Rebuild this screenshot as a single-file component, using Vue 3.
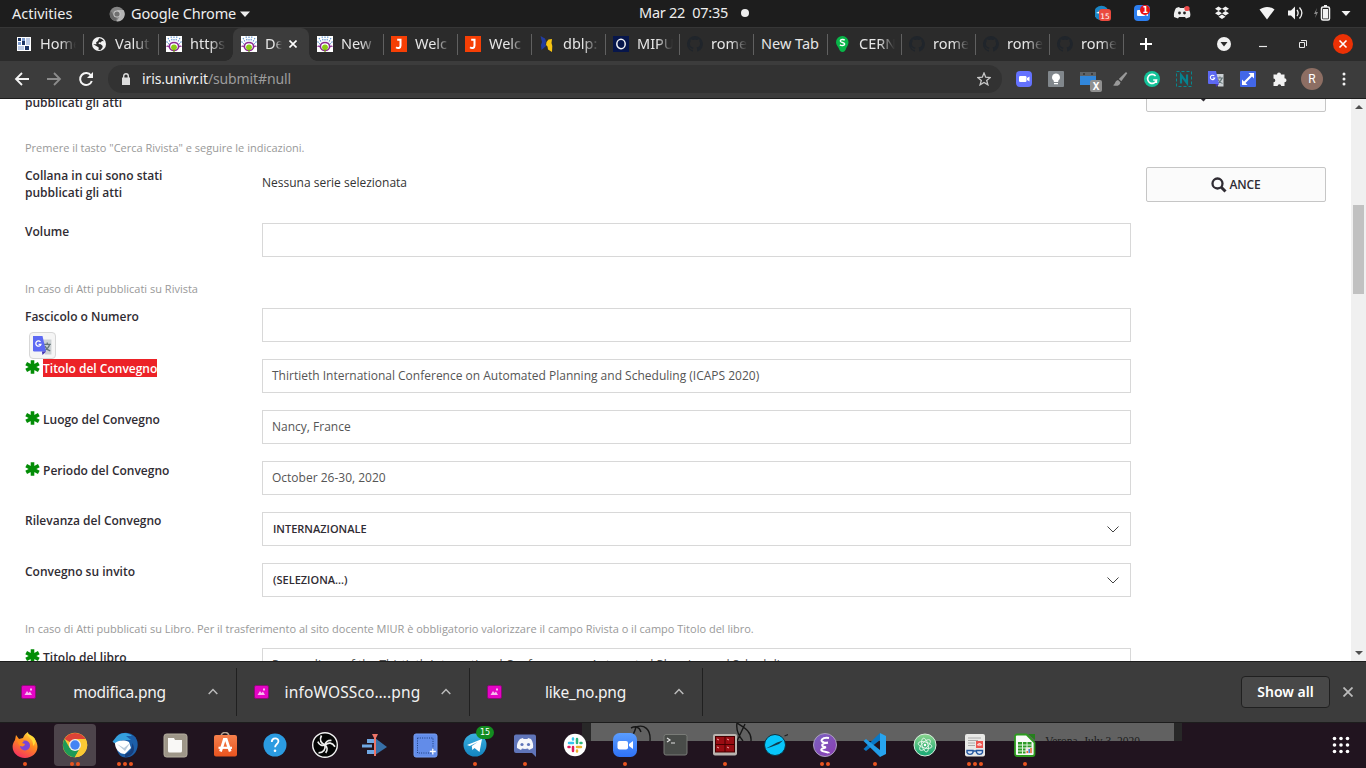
<script setup>
const tabs = [
  { icon: 'grid', title: 'Home', w: 75 },
  { icon: 'globe', title: 'Valut', w: 75 },
  { icon: 'univr', title: 'https', w: 75, nosep: true },
  { icon: 'univr', title: 'De', w: 76, active: true },
  { icon: 'univr', title: 'New', w: 74 },
  { icon: 'jay', title: 'Welc', w: 74 },
  { icon: 'jay', title: 'Welc', w: 74 },
  { icon: 'dblp', title: 'dblp:', w: 74 },
  { icon: 'oh', title: 'MIPU', w: 74 },
  { icon: 'github', title: 'rome', w: 74 },
  { icon: '', title: 'New Tab', w: 74 },
  { icon: 'pin', title: 'CERN', w: 74 },
  { icon: 'github', title: 'rome', w: 74 },
  { icon: 'github', title: 'rome', w: 74 },
  { icon: 'github', title: 'rome', w: 74 },
]
const extensions = ['zoom', 'bulb', 'calendar', 'brush', 'grammarly', 'nimbus', 'translate', 'expand', 'puzzle']
const rows = [
  { label: 'pubblicati gli atti', cut: true, kind: 'plain', text: '' },
  { hint: 'Premere il tasto "Cerca Rivista" e seguire le indicazioni.' },
  { label: 'Collana in cui sono stati pubblicati gli atti', button: 'ANCE', text: 'Nessuna serie selezionata', kind: 'plain' },
  { label: 'Volume', kind: 'input', text: '' },
  { hint: 'In caso di Atti pubblicati su Rivista' },
  { label: 'Fascicolo o Numero', kind: 'input', text: '' },
  { label: 'Titolo del Convegno', req: true, selected: true, kind: 'input', text: 'Thirtieth International Conference on Automated Planning and Scheduling (ICAPS 2020)' },
  { label: 'Luogo del Convegno', req: true, kind: 'input', text: 'Nancy, France' },
  { label: 'Periodo del Convegno', req: true, kind: 'input', text: 'October 26-30, 2020' },
  { label: 'Rilevanza del Convegno', kind: 'select', text: 'INTERNAZIONALE' },
  { label: 'Convegno su invito', kind: 'select', text: '(SELEZIONA...)' },
  { hint: 'In caso di Atti pubblicati su Libro. Per il trasferimento al sito docente MIUR è obbligatorio valorizzare il campo Rivista o il campo Titolo del libro.' },
  { label: 'Titolo del libro', req: true, kind: 'input', text: 'Proceedings of the Thirtieth International Conference on Automated Planning and Scheduling' },
]
const downloads = ['modifica.png', 'infoWOSSco….png', 'like_no.png']
const dock = [
  ['firefox', 1], ['chrome', 2], ['thunderbird', 3], ['files', 0], ['software', 0], ['help', 0], ['obs', 0],
  ['kdenlive', 0], ['shot', 0], ['telegram', 1], ['discord', 1], ['slack', 0], ['zoomapp', 1], ['terminal', 0],
  ['terminator', 1], ['planet', 0], ['emacs', 2], ['vscode', 1], ['atom', 0], ['reader', 3], ['calc', 1],
]
</script>

<template>
  <div class="screen">
    <svg class="defs" width="0" height="0">
      <defs>
        <linearGradient id="ffo" x1=".8" y1="0" x2=".3" y2="1"><stop offset="0" stop-color="#ffe34a" /><stop offset=".45" stop-color="#ff8a1e" /><stop offset="1" stop-color="#f52f62" /></linearGradient>
        <linearGradient id="blue" x1="0" y1="0" x2="0" y2="1"><stop offset="0" stop-color="#3bb0e0" /><stop offset="1" stop-color="#1384bf" /></linearGradient>
        <linearGradient id="zm" x1="0" y1="0" x2="0" y2="1"><stop offset="0" stop-color="#5a9dff" /><stop offset="1" stop-color="#2f72f5" /></linearGradient>
        <linearGradient id="sw" x1="0" y1="0" x2="0" y2="1"><stop offset="0" stop-color="#f6804c" /><stop offset="1" stop-color="#e9541f" /></linearGradient>
        <linearGradient id="em" x1="0" y1="0" x2="1" y2="1"><stop offset="0" stop-color="#7a62c0" /><stop offset="1" stop-color="#8a3db3" /></linearGradient>
        <linearGradient id="at" x1="0" y1="0" x2="0" y2="1"><stop offset="0" stop-color="#8bd68d" /><stop offset="1" stop-color="#15a673" /></linearGradient>
      </defs>
      <symbol id="i-grid" viewBox="0 0 16 16"><path fill="#fff" d="M1 1h14v14H1z" /><path fill="#1c3566" d="M2 2h3v3H2zM6 5h3v4H6zM9 10h4v4H9z" /><path fill="#7e9dd0" d="M6 2h3v3H6zM2 6h3v3H2z" /><path fill="#bccbe6" d="M10 2h4v7h-4zM2 10h6v4H2z" /></symbol>
      <symbol id="i-globe" viewBox="0 0 16 16"><circle cx="8" cy="8" r="7" fill="#f2f2f2" /><path fill="#2b2b2b" d="M8 2.200c2 .2 3.800 1 4.900 3L11 5.100 9.600 6.500 8 6.300 7.500 8l2.300.3 1.900 1.600-.4 2-1.900 2-2.100-.1.600-2-1.700-1.300L2.200 8.300l3.300-.1L5.100 6.300 7 5z" /></symbol>
      <symbol id="i-univr" viewBox="0 0 16 16"><path fill="#fff" d="M0 0h16v16H0z" /><path stroke="#5a91cf" stroke-width="1.100" stroke-dasharray="1.500 1" fill="none" d="M8 .5v5M5 .5l1.300 5M11 .5L9.700 5.500M2 2l2.500 4.500M14 2l-2.500 4.500M.5 5.500L3 8M15.500 5.500L13 8" /><ellipse cx="8" cy="10.500" rx="4.600" ry="4" fill="#fff" stroke="#8b2a91" stroke-width="1.600" /><path d="M.5 10.500c1.500-1 2.500 0 3 1m12-1c-1.500-1-2.500 0-3 1" fill="none" stroke="#8b2a91" stroke-width="1.200" /><circle cx="8" cy="11.300" r="2.900" fill="#8ccb16" /><path stroke="#6d9e12" stroke-width="1.200" d="M8 13.500V16" /></symbol>
      <symbol id="i-jay" viewBox="0 0 16 16"><path fill="#f63f05" d="M0 0h16v16H0z" /><path fill="none" stroke="#fff" stroke-width="2" d="M6.200 3.800H9.500v5.900c0 2.500-2.600 3-4.400 1.600" /></symbol>
      <symbol id="i-dblp" viewBox="0 0 16 16"><path fill="#233da0" d="M1.500 0l4.500 2.500 1 2.500-.5 3 .5 2-4.500 4-.5-5 1-3z" /><path fill="#f8c512" d="M7.500 6l2-2.500L13 3l-.5 4 .8 3-.3 6-4-2.500-.5-3-1.500-1.500z" /></symbol>
      <symbol id="i-oh" viewBox="0 0 16 16"><path fill="#07164b" d="M0 0h16v16H0z" /><ellipse cx="8" cy="8" rx="4.200" ry="4.700" fill="none" stroke="#f3f3f3" stroke-width="1.500" /></symbol>
      <symbol id="i-github" viewBox="0 0 16 16"><path fill="#20252b" d="M8 0a8 8 0 0 0-2.500 15.600c.4 0 .5-.2.500-.4v-1.500c-2.200.5-2.700-1-2.700-1-.4-.9-.9-1.200-.9-1.200-.7-.5 0-.5 0-.5.800 0 1.300.8 1.300.8.700 1.300 1.900.9 2.300.7.1-.5.300-.9.500-1.100C4.700 11.200 2.900 10.500 2.900 7.500c0-.9.300-1.600.8-2.200-.1-.2-.4-1 .1-2.100 0 0 .7-.2 2.200.8a7.500 7.500 0 0 1 4 0c1.500-1 2.200-.8 2.200-.8.500 1.100.2 1.900.1 2.100.5.600.8 1.300.8 2.200 0 3-1.800 3.700-3.600 3.900.3.300.6.800.6 1.500v2.200c0 .2.100.5.600.4A8 8 0 0 0 8 0z" /></symbol>
      <symbol id="i-pin" viewBox="0 0 16 16"><path fill="#08b548" d="M7.500 0a6.300 6.300 0 0 1 6 6.500c0 2.500-2 4.500-2.600 6.500-.3 1.500-1.500 3-3.400 3s-3.100-1.500-3.400-3C3.500 11 1 9 1 6.500A6.400 6.400 0 0 1 7.500 0z" /><path fill="none" stroke="#fff" stroke-width="1.400" d="M9.700 4.200C8.700 3 5.200 3.200 5.300 5c.1 1.900 4.400 1.100 4.400 3 0 1.900-3.600 2-4.800.8" /></symbol>
      <symbol id="i-zoom" viewBox="0 0 16 16"><rect width="16" height="16" rx="4" fill="#6472ff" /><rect x="3" y="5" width="7.500" height="6" rx="1.200" fill="#fff" /><path fill="#fff" d="M11 7l2.500-1.500v5L11 9z" /></symbol>
      <symbol id="i-bulb" viewBox="0 0 16 16"><rect width="16" height="16" rx="1" fill="#81878c" /><path fill="#fff" d="M8 2.500a4 4 0 0 1 2.200 7.300V11H5.800V9.800A4 4 0 0 1 8 2.500zM6 12h4v1.300H6z" /></symbol>
      <symbol id="i-calendar" viewBox="0 0 16 16"><path fill="#606468" d="M0 1h16v5H0z" /><path fill="#3187dc" d="M0 5h16v9H0z" /><circle cx="4" cy="3" r="1" fill="#333" /><circle cx="12" cy="3" r="1" fill="#333" /></symbol>
      <symbol id="i-brush" viewBox="0 0 16 16"><path fill="#999" d="M14 1l1.300 1.200-6 8L6.800 8zM6 9l2.500 2.200C8 15 4 15.500 1 14.200c2.200-.6 1.800-4.500 5-5.200z" /></symbol>
      <symbol id="i-grammarly" viewBox="0 0 16 16"><circle cx="8" cy="8" r="8" fill="#15c39a" /><path fill="none" stroke="#fff" stroke-width="1.600" d="M11.600 5A4.500 4.500 0 1 0 12.500 9H9.200m3.200 0v3" /></symbol>
      <symbol id="i-nimbus" viewBox="0 0 16 16"><path fill="none" stroke="#06888f" stroke-dasharray="3 2" d="M.5.5h15v15H.5z" /><path fill="none" stroke="#06828e" stroke-width="2.200" d="M5 12.500V4l6 8V3.500" /></symbol>
      <symbol id="i-translate" viewBox="0 0 16 16"><path fill="#ccd1d4" d="M7 3h8.500v12.500H10z" /><path fill="none" stroke="#647577" stroke-width="1.100" d="M9 7h6M12 5.500V7m2 0c-.8 3-3 4.500-5 5.500m1-4c1 2 3 3.500 4.500 4" /><path fill="#5d69f3" d="M0 0h8l3 13H1a1 1 0 0 1-1-1z" /><path fill="#4333b6" d="M7.500 13H11l-3 3z" /><path fill="none" stroke="#fff" stroke-width="1.100" d="M6.300 5A2.200 2.200 0 1 0 6.700 7H4.700" /></symbol>
      <symbol id="i-expand" viewBox="0 0 16 16"><rect width="16" height="16" rx="1" fill="#4267e8" /><path fill="#fff" d="M8.500 2H14v5.500l-2-2L5.500 12l2 2H2V8.500l2 2L10.500 4z" /></symbol>
      <symbol id="i-puzzle" viewBox="0 0 16 16"><path fill="#f2f2f2" d="M5 3.500a2 2 0 0 1 4 0h3.500v3.700a2 2 0 0 1 0 4v3.800H9.200a1.800 1.800 0 0 0-3.600 0H1.500v-3.800a1.800 1.800 0 0 0 0-3.600V3.500z" /></symbol>

      <symbol id="i-firefox" viewBox="0 0 26 26"><path fill="url(#ffo)" d="M3 8l1-5 3 4 4-1c1-3 3-5 5-6 0 3 3 4 4 7l2-1c8 10 1 20-9 20C3 26-3 16 3 8z" /><path fill="#ffda36" d="M15 1c0 4 7 6 6 13 5-5 1-9-1-10z" /><circle cx="13" cy="13.500" r="5" fill="#7b45d8" /><path fill="#ff8a20" d="M5 8l7 1-2 2 3 1c-1 4-5 2-6 1z" /></symbol>
      <symbol id="i-chrome" viewBox="0 0 26 26"><circle cx="13" cy="13" r="12.200" fill="#fbc934" /><path fill="#dd4337" d="M13 13L2.500 7A12.200 12.200 0 0 1 23.600 7H13z" /><path fill="#1e9a57" d="M13 13l5 3-5.200 9.200A12.200 12.200 0 0 1 2.500 7l5.200 9z" /><path fill="#fbc934" d="M13 7h10.600a12.200 12.200 0 0 1-10.800 18.200L18.200 16z" /><circle cx="13" cy="13" r="6" fill="#eee" /><circle cx="13" cy="13" r="4.700" fill="#4384f3" /></symbol>
      <symbol id="i-thunderbird" viewBox="0 0 26 26"><path fill="#1c5fa9" d="M6 3C13-2 26 1 25.700 13c-.3 8-6 12.500-12 12.500-5 0-7-3-8.500-7z" /><path fill="#35a0dd" d="M5 4c6-5 12-3 15 0l-6 0 5 4-9 0-6 4C1 11 0 9 1 9z" /><path fill="#fff" d="M3 11c5-3 9-3 14-1l2 6-6 6C7 22 3 17 3 11z" /><path fill="#b9cbdc" d="M5 12l7 4 6-5-5 8z" /><path fill="#173f7d" d="M13 22c4-1 8-5 7-11 5 7 0 14-7 14z" /></symbol>
      <symbol id="i-files" viewBox="0 0 26 26"><rect x="2" y="2" width="23" height="23" rx="2.500" fill="#9e9688" stroke="#b5ae9f" /><path fill="#f9f8f6" d="M6 6h6l1 2h7v11a1.500 1.500 0 0 1-1.500 1.500h-11A1.500 1.500 0 0 1 6 19z" /></symbol>
      <symbol id="i-software" viewBox="0 0 26 26"><path fill="none" stroke="#b5a392" stroke-width="1.600" d="M9 5c0-6 8-6 8 0" /><rect x="2" y="3" width="23" height="21.500" rx="2" fill="url(#sw)" /><path fill="none" stroke="#fff" stroke-width="2.800" d="M8.500 19.500L12.300 7.500h1.900l4 12" /><path stroke="#fff" stroke-width="2.200" d="M6.500 15.800h13.500" /></symbol>
      <symbol id="i-help" viewBox="0 0 26 26"><circle cx="13" cy="13" r="11.500" fill="#2b9be1" /><path d="M9.800 10c0-5 7-4.500 6.600-.5-.2 2.500-3.300 2.700-3.300 5.800" fill="none" stroke="#fff" stroke-width="1.800" /><circle cx="13" cy="18.800" r="1.300" fill="#fff" /></symbol>
      <symbol id="i-obs" viewBox="0 0 26 26"><circle cx="13" cy="13" r="12.300" fill="#040404" stroke="#f2f2f2" stroke-width="1.400" /><g fill="none" stroke="#f0f0f0" stroke-width="1.700"><path d="M9.500 3.500C7 8 9 11.500 13 13c.5-3 3-5 6.500-4.500" /><path d="M9.500 3.500C7 8 9 11.500 13 13c.5-3 3-5 6.500-4.500" transform="rotate(120 13 13)" /><path d="M9.500 3.500C7 8 9 11.500 13 13c.5-3 3-5 6.500-4.500" transform="rotate(240 13 13)" /></g></symbol>
      <symbol id="i-kdenlive" viewBox="0 0 26 26"><path fill="#71a8e4" d="M5 7h8v4H5zM0 12.500h10v3H0zM5 18h8v4H5z" /><path fill="#3770a8" d="M13 6l12 9-12 8z" /><path fill="#ed7568" d="M10 2h6l-2 4v18h-2V6z" /></symbol>
      <symbol id="i-shot" viewBox="0 0 26 26"><rect x="2" y="2" width="23" height="23" rx="2" fill="#628ce9" stroke="#779ff5" /><path stroke="#1d3d7c" stroke-dasharray="1 1.300" fill="none" d="M5.500 6H21v15H5.500z" /><path stroke="#fff" stroke-width="1.300" d="M20.800 16.500v6m-3-3h6" /></symbol>
      <symbol id="i-telegram" viewBox="0 0 26 26"><circle cx="13" cy="13" r="11.500" fill="url(#blue)" /><path fill="#fff" d="M5 13L20 7l-2.500 13-5-4-2.200 2-.5-4 6-4-8 4z" /></symbol>
      <symbol id="i-discord" viewBox="0 0 26 26"><path fill="#6075b9" d="M4 2.500h18a2 2 0 0 1 2 2V25l-4-4H4a2 2 0 0 1-2-2v-15a2 2 0 0 1 2-1.500z" /><path fill="#f6f7fa" d="M8 7l3-1 .5 1h4L16 6l3 1c2 3 2.500 6 2 9l-4 2-1-1.500c-2 .5-4 .5-6 0L9 18l-4-2c-.4-4 .7-6.500 3-9z" /><circle cx="10" cy="12.500" r="1.600" fill="#6075b9" /><circle cx="16.500" cy="12.500" r="1.600" fill="#6075b9" /></symbol>
      <symbol id="i-slack" viewBox="0 0 26 26"><circle cx="13" cy="13" r="11.200" fill="#fff" /><g stroke-width="2.500" stroke-linecap="round"><path stroke="#36c5f0" d="M7 11h4M11 6.500v1" /><path stroke="#2eb67d" d="M15 7v4M18.500 11h1" /><path stroke="#ecb22e" d="M15 15h4M15 18.500v1" /><path stroke="#e01e5a" d="M11 15v4M6.500 15h1" /></g></symbol>
      <symbol id="i-zoomapp" viewBox="0 0 26 26"><rect x="1" y="1" width="24" height="24" rx="6.500" fill="url(#zm)" /><rect x="5.500" y="9" width="10.500" height="8.500" rx="2" fill="#fff" /><path fill="#fff" d="M17 12l4-3v8l-4-3z" /></symbol>
      <symbol id="i-terminal" viewBox="0 0 26 26"><rect x="2" y="2.500" width="23" height="20.500" rx="2" fill="#494c49" stroke="#797b77" /><path fill="none" stroke="#e0e0e0" stroke-width="1.200" d="M5 6l3 2-3 2m4 1h4" /></symbol>
      <symbol id="i-terminator" viewBox="0 0 26 26"><rect x="1" y="2" width="24" height="21.500" rx="2" fill="#b9b4af" /><path fill="#400" d="M3 4h20v16.500H3z" /><path fill="#9a0d13" d="M4 5h8.500v7H4zM13.500 5H22v7h-8.500zM4 13h8.500v6.500H4zM13.500 13H22v6.500h-8.500z" /><path stroke="#f2a8a8" d="M5 7l2 1m8-1l2 1M5 15l2 1m8-1l2 1" /></symbol>
      <symbol id="i-planet" viewBox="0 0 26 26"><circle cx="13" cy="13" r="10.500" fill="#08c6fb" stroke="#0a3140" /><path fill="#113d50" d="M4 16.500L15 10.500l6-2-4 3.500-8 3z" /><path stroke="#222" stroke-width="1.200" d="M22.500 4l3.500-1.500" /></symbol>
      <symbol id="i-emacs" viewBox="0 0 26 26"><circle cx="13" cy="13" r="11.500" fill="url(#em)" stroke="#aaa0bb" /><path d="M17 6c-7-1-10 3-5 4.500 2 .5 4 .2 4 .2-8 .8-7 4-2 4.500-7 2-6 4 1 5 2 .3 2 1 2 1" fill="none" stroke="#fff" stroke-width="2" /></symbol>
      <symbol id="i-vscode" viewBox="0 0 26 26"><path fill="#27a4ef" d="M18 1l6 3v18l-6 3z" /><path fill="#0878c6" d="M18 1v7L4 19l-2.500-2z" /><path fill="#219ce7" d="M18 25v-7L4 7 1.500 9z" /></symbol>
      <symbol id="i-atom" viewBox="0 0 26 26"><circle cx="13" cy="13" r="11" fill="url(#at)" stroke="#d8ebdd" /><g fill="none" stroke="#e5f5e9" stroke-width=".9"><ellipse cx="13" cy="13" rx="7" ry="3" transform="rotate(75 13 13)" /><ellipse cx="13" cy="13" rx="7" ry="3" transform="rotate(15 13 13)" /><ellipse cx="13" cy="13" rx="7" ry="3" transform="rotate(135 13 13)" /></g><circle cx="13" cy="13" r="1.200" fill="#fff" /></symbol>
      <symbol id="i-reader" viewBox="0 0 26 26"><rect x="3" y="2" width="20" height="22.500" rx="2" fill="#e9e9e7" /><path stroke="#aaa" d="M6 6h13M6 8.500h10M6 11h7M6 13.500h7" /><path fill="#ee5550" d="M14 9h7v7h-7z" /><path fill="none" stroke="#fff" d="M15.500 13l2-2 2 2z" /><path fill="#dce8fa" stroke="#24569e" stroke-width="1.400" d="M5 18.500h6v2c-1 2.500-5 2.500-6 0zm9.500 0h6v2c-1 2.500-5 2.500-6 0zm-3.500.5h3.500" /></symbol>
      <symbol id="i-calc" viewBox="0 0 26 26"><path fill="#f9fbf8" stroke="#2d9b1f" stroke-width="1.800" d="M5 2.500h9.500l8 8V22a2 2 0 0 1-2 2H5a2 2 0 0 1-2-2V4.500a2 2 0 0 1 2-2z" /><path fill="#257f1c" d="M16 2h7v6z" /><path fill="#2c9a26" d="M6 10h13.500v11.500H6z" /><path stroke="#dff5dc" d="M6 13h13.500M6 16h13.500M6 19h13.500M10.500 10v12M15 10v12" /><path fill="#efe8e5" d="M13.500 15.500h7v6.500h-7z" /><path stroke="#e66b31" stroke-width="1.500" d="M15.300 21v-2M19 21v-5" /><path stroke="#3b79d2" stroke-width="1.500" d="M17.200 21v-4" /></symbol>
    </svg>

    <header class="topbar">
      <span class="activities">Activities</span>
      <svg class="cr" width="16" height="16" viewBox="0 0 16 16"><circle cx="8" cy="8" r="7.300" fill="#858585" /><path fill="#b6b6b6" d="M8 4h6.500a7.300 7.300 0 0 1-7 11.300L11 10z" /><path fill="#666" d="M1.500 4.500L5 10l3 1-1 4.200A7.300 7.300 0 0 1 1.500 4.500z" /><circle cx="8" cy="8" r="3.600" fill="#c8c8c8" /><circle cx="8" cy="8" r="2.600" fill="#707070" /></svg>
      <span class="appname">Google Chrome</span>
      <svg class="caret" width="10" height="6"><path fill="#eee" d="M0 .5h10L5 6z" /></svg>
      <span class="clock">Mar 22&nbsp; 07:35</span><i class="notif"></i>
      <svg class="tray" width="271" height="27" viewBox="0 0 271 27">
        <circle cx="6.500" cy="13" r="7.300" fill="#1b86c6" /><path fill="#fff" d="M1 13l8-4-2 5z" /><rect x="4" y="9" width="12" height="12" rx="3" fill="#ea4a3e" /><text x="5.300" y="18.500" class="tiny">15</text>
        <rect x="39" y="5" width="16" height="16" rx="4" fill="#2d7ff0" /><rect x="42" y="10" width="8" height="6" rx="1" fill="#fff" /><path fill="#fff" d="M50 12l3-1v5l-3-1z" /><circle cx="50" cy="10" r="5" fill="#e91114" /><text x="47.500" y="13" class="tiny bold">1</text>
        <path fill="#eee" d="M81 8l3-1 1 1h4l1-1 3 1c2 3 3 6 2 9l-4 1.500-1-1.500h-6l-1 1.500-4-1.500c-.5-4 .5-6 2-9z" /><circle cx="84.500" cy="13" r="1.400" fill="#222" /><circle cx="89.500" cy="13" r="1.400" fill="#222" /><circle cx="92" cy="8.500" r="2.600" fill="#ee4949" />
        <path fill="#f3f3f3" d="M123.500 6.500L120 8.700l3.500 2.200 3.500-2.200zM130.500 6.500L127 8.700l3.500 2.200 3.500-2.200zM123.500 11l-3.500 2.200 3.500 2.200 3.500-2.200zM130.500 11l-3.500 2.200 3.500 2.200 3.500-2.200zM127 14.500l-3.500 2.200 3.500 2.200 3.500-2.200z" />
        <path fill="#f3f3f3" d="M172 19.500L164.500 9.500c5-3.500 10-3.500 15 0z" />
        <path fill="#f3f3f3" d="M193 10.500h3l4-4v13l-4-4h-3z" /><path fill="none" stroke="#eee" stroke-width="1.300" d="M202 10c1.500 2 1.500 4 0 6m2.500-8.500c3 3.500 3 7.500 0 11" />
        <path fill="#888" d="M208 8l-3 6h2l-1 4 3-6h-2z" transform="translate(14 0)" /><rect x="226.500" y="7" width="8" height="13" rx="1.500" fill="none" stroke="#f3f3f3" stroke-width="1.500" /><path fill="#f3f3f3" d="M229 5h3v2h-3zM228 9h5v9.500h-5z" />
        <path fill="#f3f3f3" d="M246.500 11h9l-4.500 5z" />
      </svg>
    </header>

    <div class="tabstrip">
      <div v-for="(t, i) in tabs" :key="i" class="tab" :class="{ active: t.active, sep: !t.nosep && !t.active }" :style="{ width: t.w + 'px' }">
        <svg v-if="t.icon" class="fav" width="16" height="16"><use :href="'#i-' + t.icon" /></svg>
        <span class="title" :class="{ full: !t.icon }">{{ t.title }}</span>
        <svg v-if="t.active" class="close" width="8" height="8"><path d="M.5.500l7 7m0-7l-7 7" stroke="#fff" stroke-width="1.600" /></svg>
      </div>
      <svg class="winbtns" width="243" height="34">
        <path stroke="#fff" stroke-width="2" d="M17 16h12M23 10v12" />
        <circle cx="101" cy="16" r="7" fill="#f2f2f2" /><path fill="#2b2b2b" d="M97.500 14h7L101 18.500z" />
        <path stroke="#e8e8e8" stroke-width="1.200" d="M136 18.500h8" />
        <path fill="none" stroke="#e8e8e8" d="M176.500 14.500h5v5h-5zM178 12.500h5.500V18" />
        <circle cx="220" cy="16" r="10" fill="#eb3105" /><path stroke="#fff" stroke-width="1.600" d="M216.500 12.500l7 7m0-7l-7 7" />
      </svg>
    </div>

    <div class="toolbar">
      <svg class="nav" width="96" height="36" fill="none" stroke-width="1.800">
        <path stroke="#f5f5f5" d="M29 18H16m6-6l-6 6 6 6" /><path stroke="#8c8c8c" d="M47 18h13m-6-6l6 6-6 6" />
        <path stroke="#f5f5f5" stroke-width="2" d="M91 14.500a6 6 0 1 0 .8 5.500" /><path fill="#f5f5f5" d="M93 11v6h-6z" />
      </svg>
      <div class="omnibox">
        <svg width="8" height="12"><path fill="#ddd" d="M0 4.500h8V12H0z" /><path fill="none" stroke="#ddd" stroke-width="1.400" d="M1.700 5V3c0-3 4.600-3 4.600 0v2" /></svg>
        <span class="url">iris.univr.it<em>/submit#null</em></span>
        <svg width="14" height="14" viewBox="0 0 14 14"><path fill="none" stroke="#c8c8c8" stroke-width="1.300" d="M7 1l1.700 4.200 4.500.3-3.500 2.900 1.200 4.400L7 10.400l-3.900 2.400 1.200-4.400L.8 5.500l4.500-.3z" /></svg>
      </div>
      <div class="exts">
        <span v-for="e in extensions" :key="e" class="ext"><svg width="16" height="16"><use :href="'#i-' + e" /></svg><b v-if="e === 'calendar'">X</b></span>
      </div>
      <span class="avatar">R</span>
      <svg class="more" width="4" height="14" fill="#f2f2f2"><circle cx="2" cy="2" r="1.500" /><circle cx="2" cy="7" r="1.500" /><circle cx="2" cy="12" r="1.500" /></svg>
    </div>

    <main class="page">
      <div class="form">
        <template v-for="(r, i) in rows" :key="i">
          <p v-if="r.hint" class="hint">{{ r.hint }}</p>
          <div v-else class="row" :class="r.kind">
            <div class="label" :class="{ req: r.req, cut: r.cut }">
              <svg v-if="r.req" width="15" height="14" viewBox="0 0 14 14"><path stroke="#038d06" stroke-width="3.600" d="M7 .2v13.600M.7 3.600l12.600 6.800M13.300 3.600L.7 10.400" /></svg>
              <span :class="{ sel: r.selected }">{{ r.label }}</span>
              <i v-if="r.selected" class="bubble"><svg width="19" height="19"><use href="#i-translate" /></svg></i>
            </div>
            <div class="field">{{ r.text }}<svg v-if="r.kind === 'select'" width="12" height="7"><path fill="none" stroke="#444" d="M.5.500L6 6l5.500-5.500" /></svg></div>
            <div v-if="r.button || r.cut" class="btn" :class="{ wide: r.cut }"><svg width="16" height="16"><circle cx="6.500" cy="6.500" r="5" fill="none" stroke="#302c33" stroke-width="2.300" /><path stroke="#302c33" stroke-width="3" d="M10 10l4.500 4.500" /></svg>{{ r.button }}</div>
          </div>
        </template>
      </div>
      <div class="scroll"><svg width="8" height="4"><path fill="#505050" d="M0 4h8L4 0z" /></svg><i></i><svg width="8" height="4"><path fill="#505050" d="M0 0h8L4 4z" /></svg></div>
    </main>

    <footer class="shelf">
      <div v-for="d in downloads" :key="d" class="dl">
        <svg width="15" height="14"><rect x=".5" y=".5" width="14" height="13" rx="1.500" fill="#e404c5" stroke="#8b0a78" /><path fill="#f7b9ed" d="M3.500 10l2.500-4L7.500 8 9 6.500l2 3.500zM9 3.500h2v2H9z" /></svg>
        <span>{{ d }}</span>
        <svg width="10" height="7"><path fill="none" stroke="#bbb" stroke-width="1.500" d="M.700 6L5 1.500 9.300 6" /></svg>
      </div>
      <div class="spacer"></div>
      <div class="showall">Show all</div>
      <svg class="x" width="10" height="10"><path stroke="#bbb" stroke-width="1.800" d="M.500.500l9 9m0-9l-9 9" /></svg>
    </footer>

    <nav class="dock">
      <div class="behind"><svg width="220" height="18" fill="none" stroke="#171717" stroke-width="1.400"><path d="M38 17c4-4 6-9 7-13 8-3 15 2 14 14M40 5c4-2 8-2 10 4M146 0c-1 6 1 12 6 18m-6-18c6 4 15 8 14 18m-14 0l8-17" /></svg><span>Verona, July 3, 2020</span></div>
      <div v-for="[n, c] in dock" :key="n" class="app" :class="{ on: n === 'chrome' }">
        <svg width="26" height="26"><use :href="'#i-' + n" /></svg>
        <b v-if="n === 'telegram'">15</b>
        <div class="dots"><i v-for="k in c" :key="k"></i></div>
      </div>
      <svg class="grid" width="18" height="18" fill="#fff"><template v-for="y in 3" :key="y"><circle v-for="x in 3" :key="x" :cx="x * 6.500 - 4" :cy="y * 6.500 - 4" r="1.800" /></template></svg>
    </nav>
  </div>
</template>

<style>
html, body { margin: 0; background: #fff; }
body { overflow: hidden; }
</style>
<style scoped>
* { box-sizing: border-box; }
svg { display: block; flex: none; }
.screen { position: relative; width: 1366px; height: 768px; overflow: hidden; display: flex; flex-direction: column; font-family: "Noto Sans", sans-serif; white-space: nowrap; }
.defs { position: absolute; }
.topbar { height: 27px; flex: none; background: #1d1d1d; color: #eee; display: flex; align-items: center; font-size: 14.500px; line-height: 27px; position: relative; }
.activities { width: 97px; padding-left: 12px; }
.cr { margin-left: 12px; }
.appname { margin-left: 6px; width: 109px; letter-spacing: -.15px; }
.clock { position: absolute; left: 639px; top: -1px; letter-spacing: -.25px; }
.notif { position: absolute; left: 741px; top: 9px; width: 8px; height: 8px; border-radius: 50%; background: #eee; }
.tray { margin-left: auto; }
.tiny { font: 7.500px "DejaVu Sans", sans-serif; fill: #fff; }
.bold { font-weight: bold; font-size: 8px; }
.tabstrip { height: 34px; flex: none; background: #2b2b2b; border-top: 1px solid #363636; display: flex; padding-left: 8px; }
.tab { height: 33px; display: flex; align-items: center; padding: 0 0 2px 8px; position: relative; color: #e6e6e6; font-size: 14.500px; flex: none; }
.tab.sep::after { content: ""; position: absolute; right: -1px; top: 6px; width: 1px; height: 21px; background: #606060; }
.tab.active { background: #3c3c3c; border-radius: 8px 8px 0 0; }
.tab.active::before, .tab.active::after { content: ""; position: absolute; bottom: 0; width: 8px; height: 8px; }
.tab.active::before { left: -8px; background: radial-gradient(circle at 0 0, #2b2b2b 7.500px, #3c3c3c 8px); }
.tab.active::after { right: -8px; background: radial-gradient(circle at 100% 0, #2b2b2b 7.500px, #3c3c3c 8px); }
.fav { margin-right: 8px; }
.title { width: 36px; overflow: hidden; mask-image: linear-gradient(90deg, #000 55%, transparent 100%); line-height: 22px; margin-top: -1px; }
.title.full { width: 62px; mask-image: none; }
.active .title { width: 17px; margin-right: 7px; }
.winbtns { flex: none; }
.toolbar { height: 37px; flex: none; background: #3c3c3c; display: flex; align-items: center; padding-bottom: 1px; }
.nav { margin-right: 12px; }
.omnibox { width: 894px; height: 28px; border-radius: 14px; background: #323232; display: flex; align-items: center; padding: 0 11px 0 14px; }
.url { margin-left: 12px; font-size: 14px; letter-spacing: -.12px; color: #f0f0f0; flex: 1; line-height: 28px; }
.url em { font-style: normal; color: #9d9d9d; }
.exts { display: flex; gap: 16px; margin-left: 14px; }
.ext { position: relative; width: 16px; }
.ext b { position: absolute; left: 10px; top: 9px; width: 12px; height: 12px; border-radius: 2px; background: #909090; color: #fff; font-size: 10px; line-height: 12px; text-align: center; }
.avatar { margin-left: 13px; width: 22px; height: 22px; border-radius: 50%; background: #8d6e63; color: #fff; font: 12px/22px Roboto, sans-serif; text-align: center; }
.more { margin-left: 19px; }
.page { height: 563px; flex: none; border-top: 1px solid #1d1d1d; background: #fff; display: flex; overflow: hidden; font-family: "Open Sans", sans-serif; font-size: 12px; color: #333; }
.form { width: 1351px; padding: 0 25px; margin-top: -22px; }
.row { display: grid; grid-template-columns: 237px 869px 180px; height: 34px; margin-bottom: 17px; }
.row.plain { height: 39px; }
.label { position: relative; font-weight: 600; line-height: 17px; color: #302c33; width: 160px; white-space: normal; font-size: 12px; }
.label.cut { padding-top: 17px; }
.label.req { display: flex; align-items: flex-start; line-height: 18px; gap: 3px; white-space: nowrap; }
.label.req > svg { margin-top: 1px; }
.label.req > span { height: 18px; line-height: 19px; }
.sel { background: #ec2227; color: #fff; }
.bubble { position: absolute; left: 4px; top: -27px; width: 27px; height: 27px; border: 1px solid #d7d7d7; border-radius: 4px; background: #f5f5f5; padding: 3px; }
.field { color: #555; line-height: 32px; }
.plain .field { color: #333; line-height: 31px; }
.input .field, .select .field { border: 1px solid #d8d8d8; padding-left: 9px; height: 34px; overflow: hidden; }
.select .field { display: flex; align-items: center; justify-content: space-between; padding: 0 11px 0 10px; font-size: 11px; font-weight: 600; color: #302c33; }
.btn { margin-left: 15px; width: 180px; height: 35px; border: 1px solid #c6c6c6; border-radius: 2px; background: #fbfbfb; display: flex; align-items: center; justify-content: center; gap: 2px; font-weight: 600; color: #302c33; letter-spacing: -.1px; }
.btn.wide { justify-content: flex-start; padding-left: 43px; }
.btn.wide svg { margin-top: -1px; }
.hint { margin: 0; height: 34px; padding-top: 6px; line-height: 18px; font-size: 11px; color: #999; }
.scroll { width: 15px; flex: none; background: #f0f0f0; display: flex; flex-direction: column; align-items: center; padding: 6px 0; }
.scroll i { width: 11px; height: 89px; background: #c1c1c1; margin: 96px 0 auto; }
.shelf { height: 62px; flex: none; background: #3c3c3c; border-top: 1px solid #1d1d1d; border-bottom: 1px solid #1d1d1d; display: flex; align-items: center; padding-bottom: 1px; }
.dl { width: 233px; height: 48px; position: relative; display: flex; align-items: center; padding: 0 19px 0 17px; color: #f2f2f2; font-size: 15.500px; }
.dl:first-child { width: 237px; padding-left: 21px; }
.dl::after { content: ""; position: absolute; right: 0; top: 0; width: 1px; height: 48px; background: #202020; }
.dl span { flex: 1; text-align: center; letter-spacing: -.25px; padding: 1px 5px 0 0; }
.dl:nth-child(2) span { letter-spacing: .15px; }
.spacer { flex: 1; }
.showall { width: 89px; height: 32px; border: 1px solid #202020; border-radius: 4px; background: #484848; color: #fff; font-weight: 600; font-size: 14px; line-height: 29px; text-align: center; }
.x { margin: 0 13px; }
.dock { height: 45px; flex: none; background: #21141f; display: flex; position: relative; }
.behind { position: absolute; left: 582px; top: 0; width: 600px; height: 18px; background: #616161; border: solid #282828; border-width: 0 8px 0 9px; overflow: hidden; }
.behind svg { position: absolute; left: 0; top: 0; }
.behind span { position: absolute; right: 34px; top: 11px; font: 11.500px/14px "Liberation Serif", serif; color: #1c1c1c; }
.app { width: 50px; height: 45px; position: relative; padding: 9px 12px 0; }
.app.on::before { content: ""; position: absolute; left: 4px; top: 1px; width: 42px; height: 42px; border-radius: 4px; background: #4d444b; }
.app svg { position: relative; }
.app b { position: absolute; left: 26px; top: 3px; width: 18px; height: 13px; border-radius: 7px; background: #138c20; color: #fff; font: 8px/13px "DejaVu Sans", sans-serif; text-align: center; }
.dots { position: absolute; left: 0; right: 0; top: 39px; display: flex; justify-content: center; gap: 2px; }
.dots i { width: 4px; height: 4px; border-radius: 50%; background: #e95420; }
.grid { margin: 13px 16px 0 auto; }
</style>
